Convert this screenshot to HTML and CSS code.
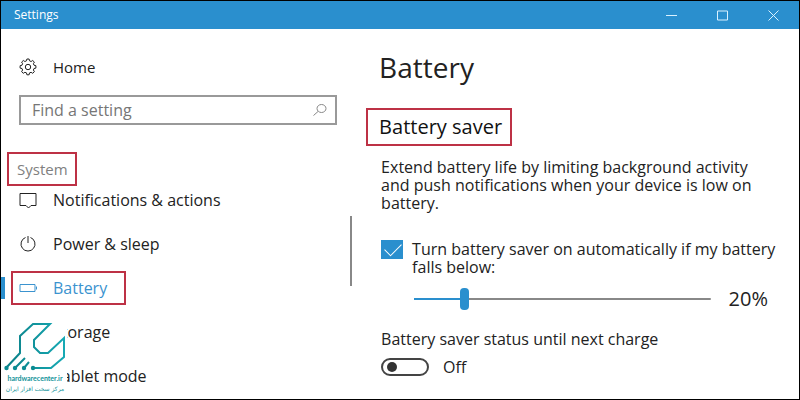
FILE: index.html
```html
<!DOCTYPE html>
<html lang="en">
    <head>
        <meta charset="utf-8">
        <title>Settings</title>
        <link rel="stylesheet" href="styles.css">
    </head>
    <body>
        <div class="window">
            <header class="titlebar">
                <span>Settings</span>
                <div class="controls">
                    <button aria-label="Minimize"><svg width="13" height="13"><path d="M1 6.500h11"/></svg></button>
                    <button aria-label="Maximize"><svg width="13" height="13"><path d="M1.500 2h10v9h-10z"/></svg></button>
                    <button aria-label="Close"><svg width="13" height="13"><path d="M1.500 1.500l10 10M11.500 1.500l-10 10"/></svg></button>
                </div>
            </header>
            <div class="content">
                <nav class="sidebar">
                    <a class="home" href="#">
                        <svg class="icon" width="18" height="18" viewBox="0 0 18 18"><path d="M7.500 2.800L7.900 1h2.200l.4 1.800 1.600.7 1.600-1 1.700 1.600-1 1.600.6 1.500 1.900.5v2.400l-1.900.4-.6 1.500 1 1.700-1.700 1.600-1.600-1-1.600.6-.4 1.900H7.900l-.4-1.900-1.600-.6-1.600 1-1.700-1.600 1-1.700-.6-1.500-1.900-.4V7.700L3 7.200l.6-1.500-1-1.600 1.700-1.600 1.600 1z"/><circle cx="9" cy="9" r="2.700"/></svg>
                        <span>Home</span>
                    </a>
                    <div class="search">
                        <input type="text" placeholder="Find a setting" aria-label="Find a setting">
                        <svg width="14" height="14"><ellipse cx="8.500" cy="5.500" rx="4.500" ry="4"/><path d="M5 8.500L.5 12.500"/></svg>
                    </div>
                    <h2 class="group marked">System</h2>
                    <ul class="menu">
                        <li><a href="#">
                            <svg class="icon" width="18" height="18"><path d="M1 2.500h16v12h-5l-2.500 2.500-2.500-2.500H1z"/></svg>
                            <span>Notifications &amp; actions</span>
                        </a></li>
                        <li><a href="#">
                            <svg class="icon" width="18" height="18"><path d="M6.500 2.500a7 7 0 1 0 5 0M9 1v7"/></svg>
                            <span>Power &amp; sleep</span>
                        </a></li>
                        <li class="active"><a class="marked" href="#">
                            <svg class="icon" width="18" height="18"><path d="M1 5.500h15v7H1zM17.500 7.500v3"/></svg>
                            <span>Battery</span>
                        </a></li>
                        <li><a href="#">
                            <svg class="icon" width="18" height="18"><path d="M1 6.500h16v6H1zM3 9.500h2"/></svg>
                            <span>Storage</span>
                        </a></li>
                        <li><a href="#">
                            <svg class="icon" width="18" height="18"><path d="M1 3.500h16v11H1z"/></svg>
                            <span>Tablet mode</span>
                        </a></li>
                    </ul>
                    <div class="scrollbar"></div>
                </nav>
                <main class="page">
                    <h1>Battery</h1>
                    <h2 class="section marked">Battery saver</h2>
                    <p>Extend battery life by limiting background activity and push notifications when your device is low on battery.</p>
                    <div class="auto">
                        <input type="checkbox" id="auto" checked>
                        <label for="auto">Turn battery saver on automatically if my battery falls below:</label>
                    </div>
                    <div class="level">
                        <input type="range" id="level" min="5" max="100" value="20" aria-label="Battery level">
                        <output for="level">20%</output>
                    </div>
                    <label class="status" for="saver">Battery saver status until next charge</label>
                    <div class="toggle">
                        <input type="checkbox" role="switch" id="saver">
                        <span>Off</span>
                    </div>
                </main>
            </div>
            <div class="logo">
                <svg width="64" height="51" viewBox="0 0 64 51">
                    <defs>
                        <linearGradient id="teal" x1="0" y1="0" x2="1" y2="0">
                            <stop offset="0" stop-color="#0b7f86"/>
                            <stop offset="1" stop-color="#16a9b4"/>
                        </linearGradient>
                    </defs>
                    <path d="M3 46L17 31V14L30 2H47L31 18V25L37 31H45L61 16V35L48 46H30M12 46L22 36M21 46L26 40" fill="none" stroke="url(#teal)" stroke-width="2"/>
                    <g fill="#0b8b92"><circle cx="3.500" cy="46" r="2.200"/><circle cx="12" cy="46" r="2.200"/><circle cx="21" cy="46" r="2.200"/><circle cx="30" cy="46" r="2.200"/></g>
                </svg>
                <span class="site">hardwarecenter.ir</span>
                <span class="tagline" lang="fa" dir="rtl">مرکز سخت افزار ایران</span>
            </div>
        </div>
    </body>
</html>
```

FILE: styles.css
```css
* {
    box-sizing: border-box;
}
body {
    margin: 0;
    font: 16px/18px "Open Sans", "Noto Sans", sans-serif;
    color: #222;
}
h1, h2, p, ul {
    margin: 0;
    padding: 0;
    font-weight: normal;
}
a {
    color: inherit;
    text-decoration: none;
}
svg {
    fill: none;
    stroke: currentColor;
}
.window {
    position: relative;
    min-height: 100vh;
    border: 1px solid #000;
    background: #fff;
}
.titlebar {
    display: flex;
    justify-content: space-between;
    align-items: center;
    height: 28px;
    padding-left: 13px;
    background: #2a8fce;
    color: #fff;
    font-size: 12px;
}
.controls {
    display: flex;
}
.controls button {
    display: flex;
    justify-content: center;
    align-items: center;
    width: 51px;
    height: 28px;
    padding: 0;
    border: 0;
    background: none;
    color: #d9f1ff;
}
.content {
    display: grid;
    grid-template-columns: 44fr 56fr;
}
.sidebar {
    position: relative;
    padding-top: 26px;
}
.icon {
    flex: none;
}
.home, .menu a {
    display: flex;
    align-items: center;
    gap: 16px;
    padding-left: 18px;
}
.home {
    height: 24px;
    font-size: 15px;
}
.search {
    display: flex;
    align-items: center;
    height: 30px;
    margin: 16px 15px 27px 18px;
    padding: 0 8px 0 11px;
    border: 2px solid #999;
    color: #888;
}
.search input {
    flex: 1;
    min-width: 0;
    height: 24px;
    padding: 0;
    border: 0;
    outline: 0;
    background: none;
    font: inherit;
}
.search input::placeholder {
    color: #767676;
}
.marked {
    border: 2px solid #bd3145;
}
.group {
    width: max-content;
    margin-left: 6px;
    padding: 6px 7px 6px 8px;
    color: #808080;
    font-size: 15px;
}
.menu {
    list-style: none;
    margin-top: -8px;
}
.menu li {
    display: flex;
    align-items: center;
    height: 44px;
}
.menu .active {
    color: #3b93cf;
}
.active::before {
    content: "";
    width: 4px;
    height: 22px;
    margin-right: 6px;
    background: #2a8fce;
}
.menu .marked {
    height: 34px;
    padding: 0 17px 0 6px;
}
.scrollbar {
    position: absolute;
    top: 187px;
    right: 0;
    width: 2px;
    height: 70px;
    background: #888;
}
.page {
    padding: 20px 20px 12px 27px;
}
h1 {
    font-size: 28px;
    line-height: 36px;
}
.section {
    width: max-content;
    margin: 23px 0 12px -13px;
    padding: 5px 8px 5px 11px;
    color: #111;
    font-size: 20px;
    line-height: 24px;
}
.page p {
    padding: 0 16px 0 2px;
}
.auto {
    display: flex;
    align-items: flex-start;
    gap: 9px;
    margin: 28px 0 0 2px;
}
.auto input {
    appearance: none;
    flex: none;
    width: 22px;
    height: 19px;
    margin: 0;
    background: #2a8fce;
}
.auto input:checked::before {
    content: "";
    display: block;
    width: 15px;
    height: 8px;
    margin: 3px 0 0 4px;
    border: solid #fff;
    border-width: 0 0 1px 1px;
    transform: rotate(-45deg);
}
.level {
    display: flex;
    align-items: center;
    gap: 18px;
    height: 24px;
    margin: 11px 11px 0 35px;
}
.level input {
    appearance: none;
    flex: 1;
    min-width: 0;
    height: 22px;
    margin: 0;
    background: linear-gradient(to right, #2a8fce 16%, #888 16%) center / 100% 2px no-repeat;
}
.level input::-webkit-slider-thumb {
    appearance: none;
    width: 9px;
    height: 22px;
    border-radius: 4px;
    background: #2a8fce;
}
.level output {
    font-size: 20px;
    line-height: 24px;
}
.status {
    display: block;
    margin: 19px 0 10px 2px;
}
.toggle {
    display: flex;
    align-items: center;
    gap: 14px;
    margin-left: 2px;
}
.toggle input {
    appearance: none;
    display: flex;
    align-items: center;
    width: 48px;
    height: 18px;
    margin: 0;
    padding: 0 4px;
    border: 2px solid #444;
    border-radius: 9px;
}
.toggle input::before {
    content: "";
    width: 10px;
    height: 10px;
    border-radius: 50%;
    background: #333;
}
.toggle input:checked {
    justify-content: flex-end;
}
.logo {
    position: absolute;
    left: 2px;
    bottom: 5px;
    display: flex;
    flex-direction: column;
    align-items: center;
    width: 64px;
    background: #fff;
    color: #12939a;
    white-space: nowrap;
}
.logo svg {
    stroke: none;
}
.site {
    font: bold 7px/10px Lato, sans-serif;
}
.tagline {
    font: 6px/11px "DejaVu Sans", sans-serif;
}
```
